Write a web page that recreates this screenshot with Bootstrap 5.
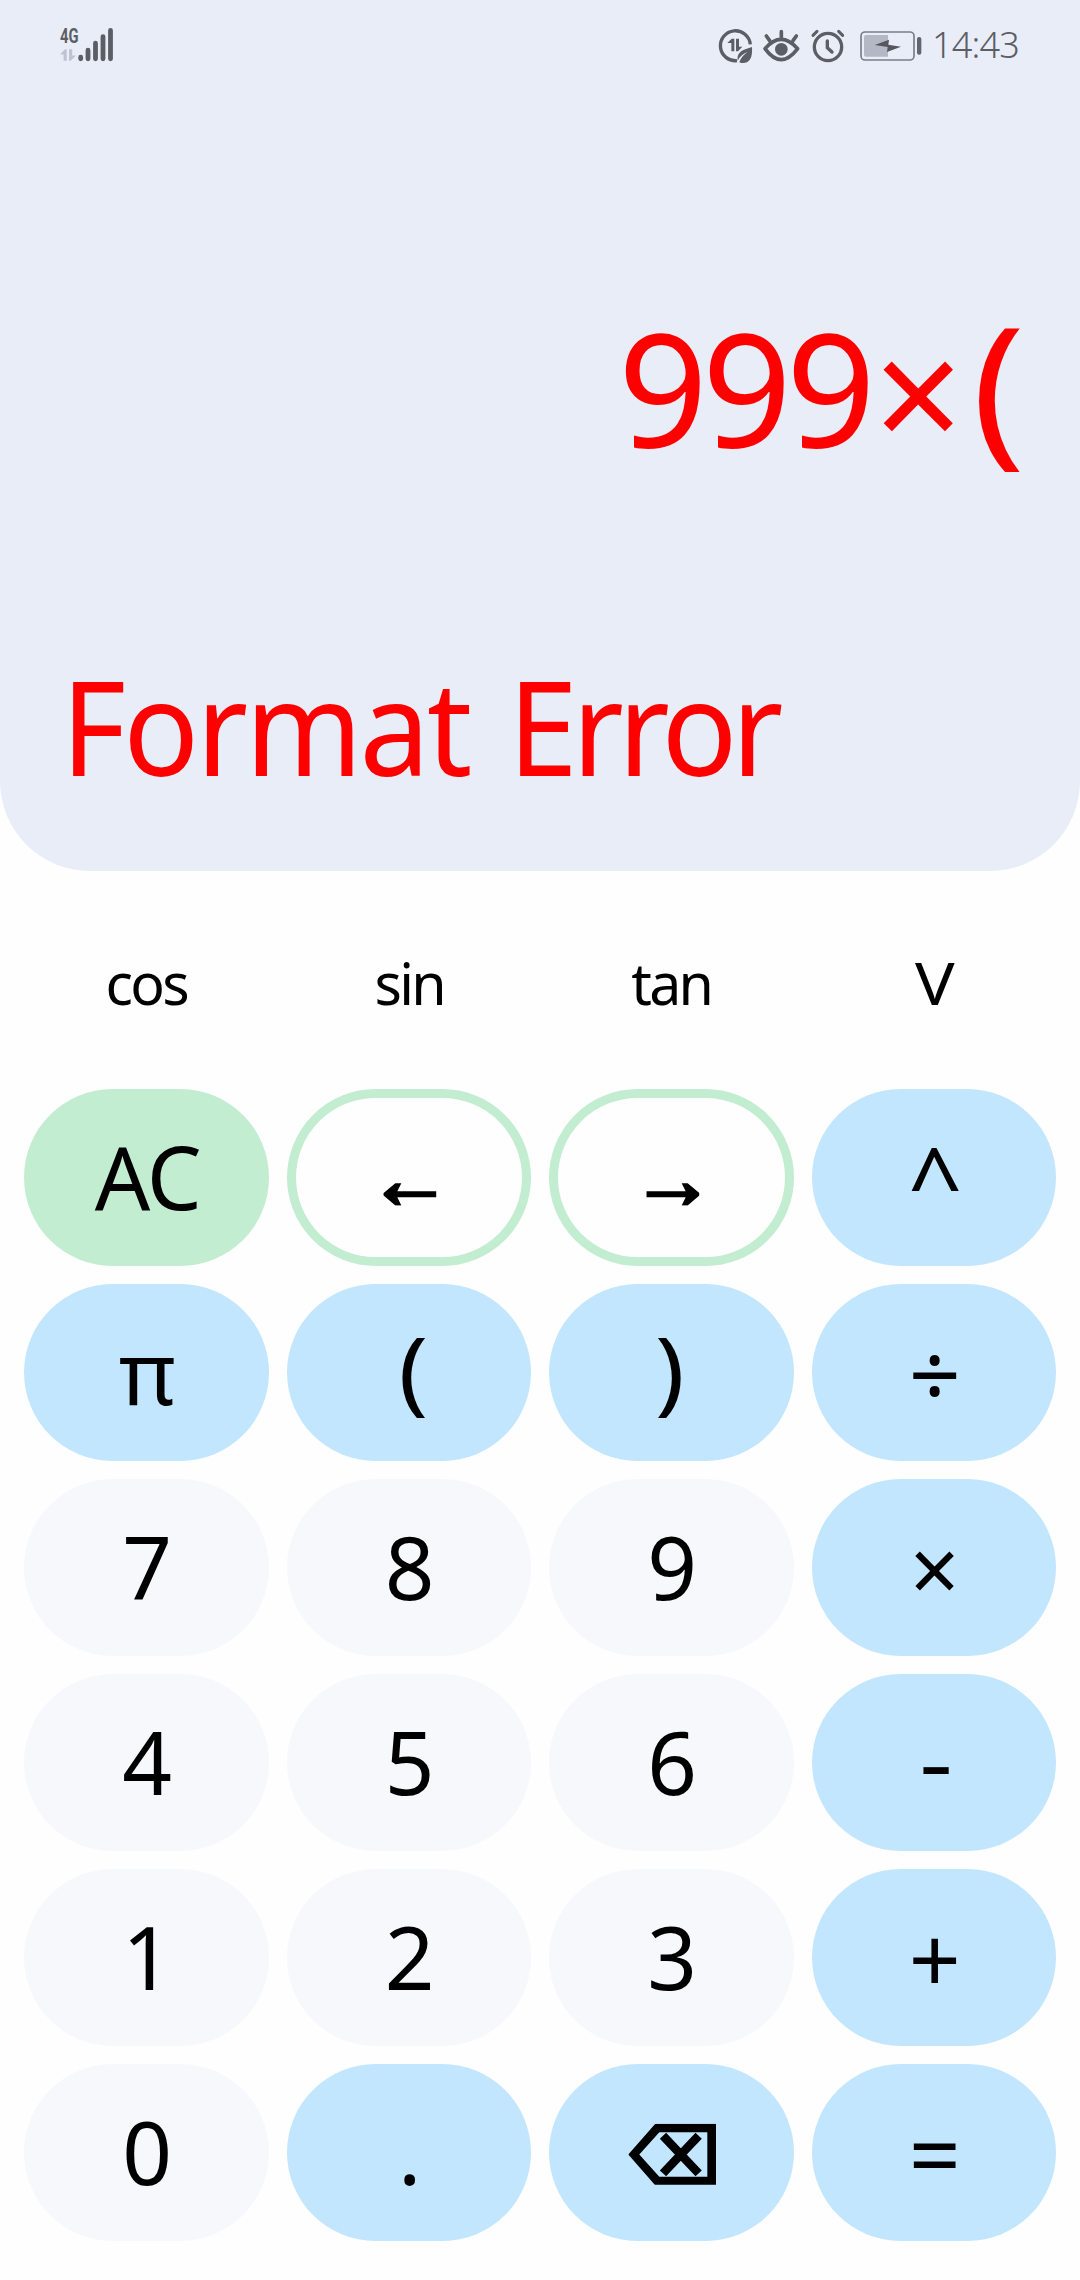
<!DOCTYPE html>
<html lang="en">
<head>
<meta charset="utf-8">
<meta name="viewport" content="width=device-width, initial-scale=1">
<title>Calculator</title>
<link href="https://cdn.jsdelivr.net/npm/bootstrap@5.3.0/dist/css/bootstrap.min.css" rel="stylesheet">
<style>
  body { background: #fefefe; color: #000; font-family: "Noto Sans", "Open Sans", sans-serif; overflow: hidden; }
  .phone { width: 1080px; height: 2280px; }
  .screen { height: 871px; background: #e9edf8; border-radius: 0 0 90px 90px; color: #f00; }
  .status { height: 90px; padding: 0 61px 0 60px; color: #5c5e65; }
  .status svg { display: block; overflow: visible; }
  .clock { font-size: 36px; font-weight: 300; line-height: 60px; letter-spacing: -.8px; margin-left: 9.8px; }
  .expr { height: 204px; margin-top: 193px; padding-right: 58.8px; line-height: 200px; font-size: 157px; }
  .expr .digits { letter-spacing: -5.7px; }
  .expr .times { margin-left: 3.2px; transform: translateY(4.5px); }
  .expr .paren { margin-left: 8.5px; font-size: 165px; transform: translateY(-.7px) scaleX(1.07); transform-origin: 0 50%; }
  .result { margin-top: 148px; padding-left: 61.4px; font-size: 132px; line-height: 180px; }
  .result span { display: block; transform: scaleX(.95); transform-origin: 0 50%; letter-spacing: -3px; }
  .result .second { margin-left: 17px; letter-spacing: -6.1px; }

  .keypad { padding: 23px 24px 0; }
  .keypad .row { --bs-gutter-x: 18px; --bs-gutter-y: 18px; }
  .key { --bs-btn-padding-x: 0; --bs-btn-padding-y: 0; --bs-btn-border-width: 0; --bs-btn-color: #000;
         --bs-btn-hover-color: #000; height: 177px; font-size: 87px; line-height: 177px; border-radius: 88.5px; }
  .key span { display: block; transform: translate(1px, -1.3px); }
  .key-fn { font-size: 59px; }
  .key-fn span { transform: scaleX(.97); letter-spacing: -2.8px; }
  .key-fn .down { transform: translate(.7px, 0) scaleX(1.12); letter-spacing: 0; }
  .key-green { background: #c3edd0; }
  .key-green span { letter-spacing: -2px; }
  .key-ring { background: #fefefe; border: 9px solid #c3edd0; }
  .key-blue { background: #c2e6fe; }
  .key-num { background: #f7f8fc; }
  .key .caret { font-size: 95px; transform: translate(1.5px, 2.2px); }
  .key .open { font-size: 92px; transform: translate(4px, -4.2px) scaleX(1.07); }
  .key .close-p { font-size: 92px; transform: translate(-1.5px, -4.2px) scaleX(1.07); }
  .key .op { font-size: 91px; transform: translate(1px, 1.2px); }
  .key .mul { transform: translate(1px, 1.2px); }
  .key .minus { transform: translate(1.7px, -2.3px) scaleX(1.2); }
  .key .arrow { transform: translate(1.3px, 16.8px); }
  .key .back { transform: translate(1.3px, 1.7px); }
</style>
</head>
<body>
<main class="phone d-flex flex-column">
  <section class="screen">
    <header class="status d-flex align-items-center justify-content-between">
      <svg width="54" height="36" viewBox="0 0 54 36">
        <text x="0" y="15.5" font-family="Roboto, sans-serif" font-weight="700" font-size="20.5" textLength="18.5" lengthAdjust="spacingAndGlyphs" fill="#5c5e65">4G</text>
        <path fill="#bfc3d0" d="M0 27.5 5 22.2h1.7v11.6H3.6v-6.3zM9 22.2h3.2v6.3h3.8l-5.3 5.3H9z"/>
        <g stroke="#5c5e65" stroke-width="4.8" stroke-linecap="round">
          <path d="M20.7 30.2v1.6M28 23.2v8.6M35.5 16.2v15.6M43 9.6v22.2M50.5 3.4v28.4"/>
        </g>
      </svg>
      <div class="d-flex align-items-center">
        <svg width="36" height="36.67" viewBox="54 50 108 110" fill="none" stroke="#5c5e65">
          <path stroke-width="10" d="M151 102A45 45 0 1 0 111 151"/>
          <path fill="#5c5e65" stroke="none" d="M82 98 95 85h8v38h-9V98zM108 85h9v24h10l-13 14h-6z"/>
          <path fill="#5c5e65" stroke="none" d="M156 110c2 30-5 48-28 48-5 0-8-1-10-3 5-13 14-23 25-30-14 5-24 14-30 26-4-28 18-33 43-41z"/>
        </svg>
        <svg class="ms-2" width="38" height="36.67" viewBox="188 50 114 110" fill="none" stroke="#5c5e65" stroke-width="11" stroke-linecap="round" stroke-linejoin="round">
          <path d="M197 115Q245 59 295 115 245 181 197 115zM246 64v19M201 77l10 14M291 77l-10 14"/>
          <circle cx="246" cy="117" r="19" fill="#5c5e65" stroke="none"/>
        </svg>
        <svg style="margin-left:10px" width="36" height="36.67" viewBox="332 50 108 110" fill="none" stroke="#5c5e65" stroke-linecap="round" stroke-linejoin="round">
          <circle cx="386" cy="110" r="41" stroke-width="10"/>
          <path stroke-width="10" d="M384 92v20l14 13"/>
          <path stroke-width="9" d="M341 75l12-12M430 75l-12-12"/>
        </svg>
        <svg style="margin-left:13.3px" width="62.7" height="36.67" viewBox="480 50 188 110">
          <rect x="483" y="65" width="159" height="84" rx="12" fill="none" stroke="#7a7d87" stroke-width="5"/>
          <path d="M498 74h66v65h-66q-6 0-6-6V80q0-6 6-6z" fill="#b4b8c4"/>
          <path d="M524 104 567 88l-2 15 38 6-42 16 2-15z" fill="#55575d"/>
          <rect x="651" y="80" width="13" height="53" rx="6" fill="#63656d"/>
        </svg>
        <div class="clock">14:43</div>
      </div>
    </header>
    <div class="expr d-flex justify-content-end align-items-baseline">
      <span class="digits">999</span><span class="times">×</span><span class="paren">(</span>
    </div>
    <div class="result d-flex"><span>Format</span> <span class="second">Error</span></div>
  </section>

  <section class="keypad">
    <div class="row row-cols-4">
      <div class="col"><button class="btn key key-fn w-100"><span>cos</span></button></div>
      <div class="col"><button class="btn key key-fn w-100"><span>sin</span></button></div>
      <div class="col"><button class="btn key key-fn w-100"><span>tan</span></button></div>
      <div class="col"><button class="btn key key-fn w-100"><span class="down">V</span></button></div>

      <div class="col"><button class="btn key key-green w-100"><span>AC</span></button></div>
      <div class="col"><button class="btn key key-ring w-100 d-flex align-items-center justify-content-center" aria-label="Left">
        <svg class="arrow" width="53.4" height="23" viewBox="42 69 160 69"><path d="M42 100 78 70H96L84 94H202V112H84L96 137H78L42 106z"/></svg></button></div>
      <div class="col"><button class="btn key key-ring w-100 d-flex align-items-center justify-content-center" aria-label="Right">
        <svg class="arrow" width="53.4" height="23" viewBox="0 69 160 69"><path d="M160 100 124 70H106L118 94H0V112H118L106 137H124L160 106z"/></svg></button></div>
      <div class="col"><button class="btn key key-blue w-100"><span class="caret">^</span></button></div>

      <div class="col"><button class="btn key key-blue w-100"><span>π</span></button></div>
      <div class="col"><button class="btn key key-blue w-100"><span class="open">(</span></button></div>
      <div class="col"><button class="btn key key-blue w-100"><span class="close-p">)</span></button></div>
      <div class="col"><button class="btn key key-blue w-100"><span class="op">÷</span></button></div>

      <div class="col"><button class="btn key key-num w-100"><span>7</span></button></div>
      <div class="col"><button class="btn key key-num w-100"><span>8</span></button></div>
      <div class="col"><button class="btn key key-num w-100"><span>9</span></button></div>
      <div class="col"><button class="btn key key-blue w-100"><span class="mul">×</span></button></div>

      <div class="col"><button class="btn key key-num w-100"><span>4</span></button></div>
      <div class="col"><button class="btn key key-num w-100"><span>5</span></button></div>
      <div class="col"><button class="btn key key-num w-100"><span>6</span></button></div>
      <div class="col"><button class="btn key key-blue w-100"><span class="minus">-</span></button></div>

      <div class="col"><button class="btn key key-num w-100"><span>1</span></button></div>
      <div class="col"><button class="btn key key-num w-100"><span>2</span></button></div>
      <div class="col"><button class="btn key key-num w-100"><span>3</span></button></div>
      <div class="col"><button class="btn key key-blue w-100"><span class="op">+</span></button></div>

      <div class="col"><button class="btn key key-num w-100"><span>0</span></button></div>
      <div class="col"><button class="btn key key-blue w-100"><span>.</span></button></div>
      <div class="col"><button class="btn key key-blue w-100 d-flex align-items-center justify-content-center" aria-label="Delete">
        <svg class="back" width="87.7" height="61.7" viewBox="27 70 263 185"><path fill-rule="evenodd" d="M27 162 108 70H290V255H108zM60 162 120 229H264V96H120z"/><path d="M131 106 238 219M238 106 131 219" stroke="#000" stroke-width="26"/></svg></button></div>
      <div class="col"><button class="btn key key-blue w-100"><span class="op">=</span></button></div>
    </div>
  </section>
</main>
<script src="https://cdn.jsdelivr.net/npm/bootstrap@5.3.0/dist/js/bootstrap.bundle.min.js"></script>
</body>
</html>
